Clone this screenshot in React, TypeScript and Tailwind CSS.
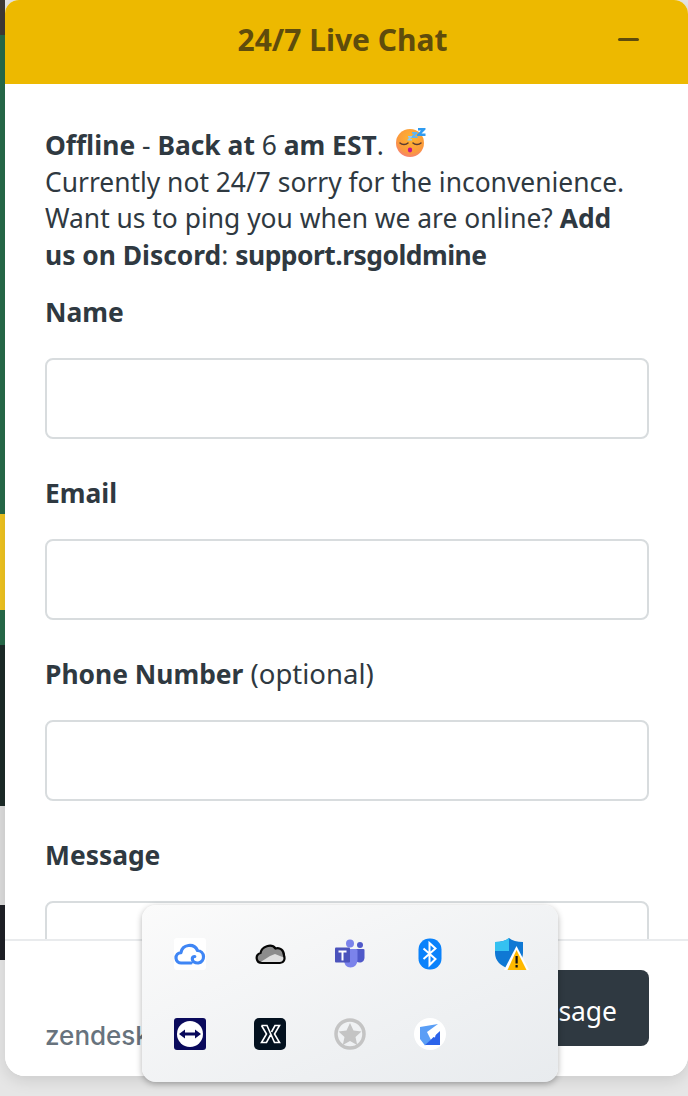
const bgStrip = [
  "h-[35px] bg-[#3f3a36]",
  "h-[479px] bg-[#276b4a]",
  "h-[96px] bg-[#f0c420]",
  "h-[35px] bg-[#276b4a]",
  "h-[161px] bg-[#1c2b28]",
  "h-[99px] bg-[#dcdcdc]",
  "h-[55px] bg-[#1e2026]",
];

const fields = [
  { label: "Name" },
  { label: "Email" },
  { label: "Phone Number", extra: "(optional)" },
  { label: "Message" },
];

function SleepEmoji() {
  return (
    <svg width="32" height="32" viewBox="0 0 32 32" className="ml-[12px] inline-block align-[-5px]">
      <defs>
        <radialGradient id="sleepFace" cx="0.55" cy="0.35" r="0.75">
          <stop offset="0" stopColor="#ffb52e" />
          <stop offset="0.65" stopColor="#fb9a3c" />
          <stop offset="1" stopColor="#f5748c" />
        </radialGradient>
      </defs>
      <circle cx="14" cy="15" r="14" fill="url(#sleepFace)" />
      <path d="M4 15c2 2 6 2 8 0M17 15c2 2 6 2 8 0" fill="none" stroke="#5b3a30" strokeWidth="1.5" strokeLinecap="round" />
      <ellipse cx="14" cy="22" rx="2.2" ry="2.4" fill="#c4108c" />
      <path d="M22 0h7.500v1.500l-4 4h4V8H21V6.500l4-4h-3z" fill="#2f9bf0" />
      <path d="M16 4h5.500v1.200l-3 3h3V10H15V8.800l3-3h-2z" fill="#5cb5f5" />
      <path d="M12 8h4v1l-2 2h2v1.500h-4.500v-1l2-2H12z" fill="#8ccbf7" />
    </svg>
  );
}

function TrayIcons() {
  return (
    <div className="absolute top-[905px] left-[142px] grid h-[177px] w-[416px] grid-cols-5 grid-rows-2 gap-x-[48px] gap-y-[48px] rounded-[14px] bg-gradient-to-br from-[#fbfbfb] to-[#e8ebee] px-[32px] pt-[33px] pb-[32px] shadow-[0_2px_6px_rgba(0,0,0,0.3)]">
      {/* backup cloud */}
      <div className="h-[32px] w-[32px]">
        <svg viewBox="0 0 32 32" width="32" height="32">
          <rect width="32" height="32" rx="3" fill="#ffffff" />
          <path d="M17 25H7.500a5.200 5.200 0 0 1-.6-10.400A8.800 8.800 0 0 1 23.500 12.500a6.300 6.300 0 0 1 .8 12.500c-3.500.2-6-1.600-6-4 0-1.500 1-2.500 2.500-2.500" fill="none" stroke="#3f86f5" strokeWidth="3.200" strokeLinejoin="round" strokeLinecap="round" />
        </svg>
      </div>
      {/* onedrive */}
      <div className="h-[32px] w-[32px]">
        <svg viewBox="0 0 32 32" width="32" height="32">
          <path d="M8 25C2 25 .5 17 6.500 15c1-6.500 11-10 15-4.500 4-1.500 8.500 1.500 8.500 7 1.500 4-.5 7.500-4 7.500z" fill="#8c8c8c" />
          <path d="M5 25 16 18l5-2 10 4c0 3-2 5-5 5z" fill="#dedede" />
          <path d="M8 25C2 25 .5 17 6.500 15c1-6.500 11-10 15-4.500 4-1.500 8.500 1.500 8.500 7 1.500 4-.5 7.500-4 7.500z" fill="none" stroke="#050505" strokeWidth="2.200" />
        </svg>
      </div>
      {/* teams */}
      <div className="h-[32px] w-[32px]">
        <svg viewBox="0 0 32 32" width="32" height="32">
          <circle cx="26" cy="7" r="3" fill="#5059c9" />
          <path d="M21 11h8.500a1 1 0 0 1 1 1v7.500c0 3-2 5-5 5-2 0-4-1-4.500-3z" fill="#5059c9" />
          <circle cx="16" cy="5.500" r="4" fill="#7b83eb" />
          <path d="M10 11h12a1.500 1.500 0 0 1 1.500 1.500v9c0 5-3 8-7 8s-6.500-3-6.500-8z" fill="#7b83eb" />
          <rect x="1" y="9.500" width="15" height="15" rx="1" fill="#4b53bc" />
          <path d="M4.500 12.500h8v2h-3v8h-2v-8h-3z" fill="#ffffff" />
        </svg>
      </div>
      {/* bluetooth */}
      <div className="h-[32px] w-[32px]">
        <svg viewBox="0 0 32 32" width="32" height="32">
          <rect x="4.500" y="0.500" width="23" height="31" rx="11" fill="#0a82fb" />
          <path d="M9.500 10.500 21.500 21 15.500 27V5l6 5.500L9.500 21" fill="none" stroke="#ffffff" strokeWidth="2" />
        </svg>
      </div>
      {/* defender warning */}
      <div className="h-[32px] w-[32px]">
        <svg viewBox="0 0 32 32" width="32" height="32" className="overflow-visible">
          <path d="M15 0c3 2.500 8 4 14 4v11c0 8-6 13-14 16C7 28 1 23 1 15V4c6 0 11-1.500 14-4z" fill="#0f78d4" />
          <path d="M15 0c-3 2.500-8 4-14 4v9h14z" fill="#35c1f1" />
          <path d="M22.500 8 35 32H10z" fill="#ffffff" />
          <path d="M22.500 12 32.500 32h-19z" fill="#ffb900" />
          <rect x="21.500" y="18" width="2.200" height="7.500" fill="#111111" />
          <rect x="21.500" y="27" width="2.200" height="2.500" fill="#111111" />
        </svg>
      </div>
      {/* teamviewer */}
      <div className="h-[32px] w-[32px]">
        <svg viewBox="0 0 32 32" width="32" height="32">
          <rect width="32" height="32" rx="3" fill="#0a0a5c" />
          <circle cx="16" cy="16" r="13" fill="#ffffff" />
          <path d="M5 16l6-4.500v3h10v-3l6 4.500-6 4.500v-3H11v3z" fill="#0a0a5c" />
        </svg>
      </div>
      {/* dark x app */}
      <div className="h-[32px] w-[32px]">
        <svg viewBox="0 0 32 32" width="32" height="32">
          <rect width="32" height="32" rx="5" fill="#03111f" />
          <path d="M7.500 7.500h5.500l7.500 17h5l-5-8.500 5-8.500h-4.500l-3.500 6.500M7.500 7.500l5 8.500-5 8.500h5l4-7.500" fill="none" stroke="#ffffff" strokeWidth="1.600" />
        </svg>
      </div>
      {/* greyed star */}
      <div className="h-[32px] w-[32px]">
        <svg viewBox="0 0 32 32" width="32" height="32">
          <circle cx="16" cy="16" r="14" fill="none" stroke="#c4c4c4" strokeWidth="3.500" />
          <path d="M16 5l3.500 7.500 8 1-6 5.500 1.700 8L16 23l-7.200 4 1.700-8-6-5.500 8-1z" fill="#c4c4c4" />
        </svg>
      </div>
      {/* blue folded logo */}
      <div className="h-[32px] w-[32px]">
        <svg viewBox="0 0 32 32" width="32" height="32">
          <circle cx="16" cy="16" r="16" fill="#ffffff" />
          <path d="M6 9 24 6l-11 8 4 8-6 5.500L6 21z" fill="#5a9ef6" />
          <path d="M26 13v14H11l6-5.500 3-3z" fill="#2b63ea" />
          <path d="M16 18l6-3.500-1 5z" fill="#ffffff" />
        </svg>
      </div>
    </div>
  );
}

export default function App() {
  return (
    <div className="relative flex h-[1096px] w-[688px] overflow-hidden bg-[#e6e6e6] font-['Noto_Sans',sans-serif] text-[#2f3941]">
      <div className="flex w-[5px] shrink-0 flex-col">
        {bgStrip.map((cls) => (
          <div key={cls} className={cls} />
        ))}
      </div>

      <div className="flex h-[1076px] flex-1 flex-col overflow-hidden rounded-t-[14px] rounded-b-[20px] bg-white shadow-[0_4px_16px_rgba(0,0,0,0.12)]">
        <header className="flex h-[84px] shrink-0 items-center bg-[#edb900] pb-[5px] text-[#5f4c0c]">
          <h1 className="flex-1 pl-[62px] text-center text-[30px] font-bold">24/7 Live Chat</h1>
          <div className="mr-[49px] h-[3px] w-[21px] rounded-full bg-[#5f4c0c]" />
        </header>

        <div className="min-h-0 flex-1 overflow-hidden px-[40px] pt-[43px]">
          <p className="w-[590px] text-[26.400px] leading-[36.700px]">
            <strong className="font-bold">Offline</strong> - <strong className="font-bold">Back at</strong> 6{" "}
            <strong className="font-bold">am EST</strong>.
            <SleepEmoji />
            <br />
            Currently not 24/7 sorry for the inconvenience.
            <br />
            Want us to ping you when we are online? <strong className="font-bold">Add us on Discord</strong>:{" "}
            <strong className="font-bold tracking-[-0.5px]">support.rsgoldmine</strong>
          </p>
          <div className="mt-[20px] flex flex-col gap-[36px]">
            {fields.map((f) => (
              <div key={f.label}>
                <label className="block h-[36px] text-[26.400px] leading-[36px] font-bold">
                  {f.label}
                  {f.extra && <span className="text-[27.500px] font-normal"> {f.extra}</span>}
                </label>
                <div className="mt-[28px] h-[81px] w-[604px] rounded-[8px] border-2 border-[#d8dcde] bg-white" />
              </div>
            ))}
          </div>
        </div>

        <footer className="flex h-[137px] shrink-0 items-start justify-between border-t-2 border-[#e9ebed] bg-white pr-[39px] pl-[40px]">
          <span className="mt-[77px] font-['Inter',sans-serif] text-[26px] leading-[36px] font-medium text-[#68737d]">zendesk</span>
          <button className="mt-[29px] flex h-[76px] items-center rounded-[8px] bg-[#2f3941] px-[32px] pt-[8px] text-[26.400px] text-white">
            Send message
          </button>
        </footer>
      </div>

      <TrayIcons />
    </div>
  );
}
